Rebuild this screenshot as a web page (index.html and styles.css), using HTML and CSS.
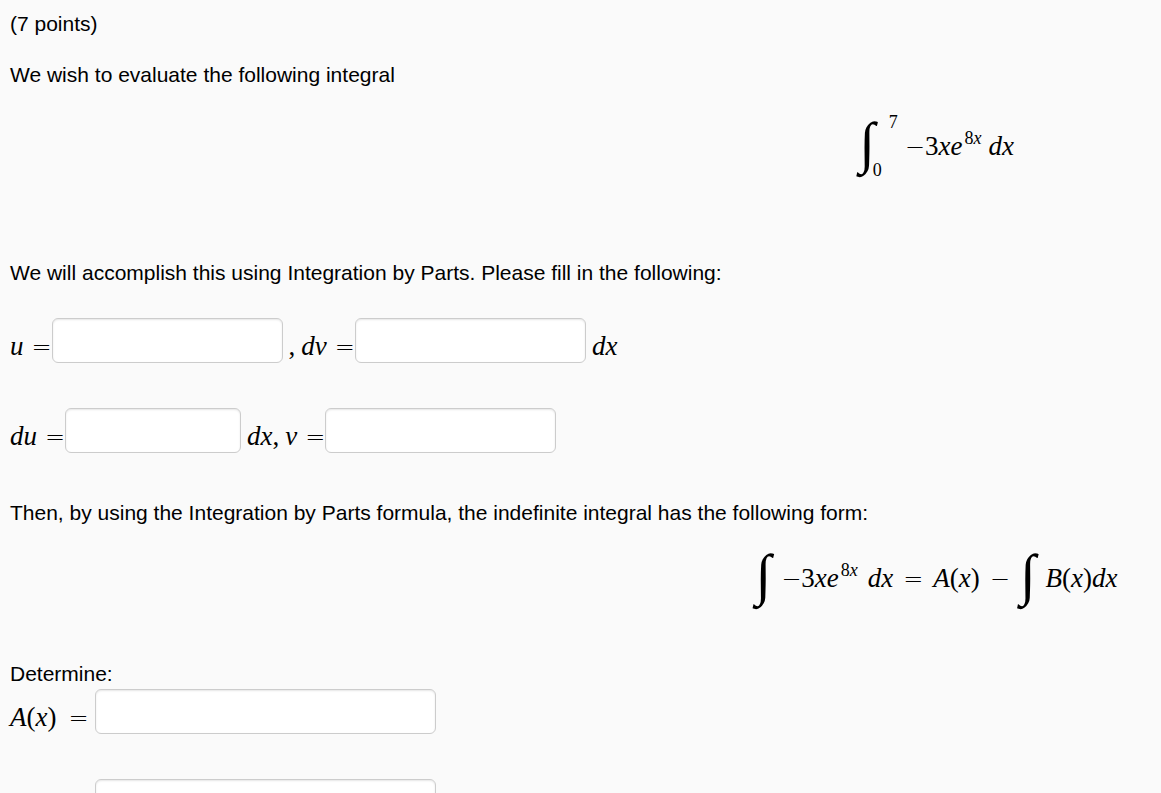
FILE: index.html
```
<!DOCTYPE html>
<html lang="en">
<head>
  <meta charset="UTF-8" />
  <title>Integration by Parts</title>
  <link rel="stylesheet" href="styles.css">
</head>
<body>

  <form class="problem">
    <p>(7 points)</p>
    <p>We wish to evaluate the following integral</p>

    <div class="equation definite">
      <span class="int">∫</span>
      <span class="limits"><span class="upper">7</span><span>0</span></span>
      <span class="math"><b>−</b>3<i>xe</i><sup>8<i>x</i></sup></span>
      <span class="math"><i>dx</i></span>
    </div>

    <p class="intro">We will accomplish this using Integration by Parts. Please fill in the following:</p>

    <div class="row">
      <label class="math" for="u"><i>u</i> <b>=</b></label>
      <input type="text" id="u" class="medium">
      <span class="math after">,</span>
      <label class="math" for="dv"><i>dv</i> <b>=</b></label>
      <input type="text" id="dv" class="medium">
      <span class="math after"><i>dx</i></span>
    </div>

    <div class="row">
      <label class="math" for="du"><i>du</i> <b>=</b></label>
      <input type="text" id="du" class="small">
      <span class="math after"><i>dx</i>,</span>
      <label class="math" for="v"><i>v</i> <b>=</b></label>
      <input type="text" id="v" class="medium">
    </div>

    <p>Then, by using the Integration by Parts formula, the indefinite integral has the following form:</p>

    <div class="equation indefinite">
      <span class="int">∫</span>
      <span class="math"><b>−</b>3<i>xe</i><sup>8<i>x</i></sup></span>
      <span class="math"><i>dx</i></span>
      <span class="math"><b>=</b></span>
      <span class="math"><i>A</i>(<i>x</i>)</span>
      <span class="math"><b>−</b></span>
      <span class="int">∫</span>
      <span class="math"><i>B</i>(<i>x</i>)<i>dx</i></span>
    </div>

    <p class="determine">Determine:</p>

    <div class="row answer">
      <label class="math" for="ax"><span><i>A</i>(<i>x</i>)</span> <b>=</b></label>
      <input type="text" id="ax" class="large">
    </div>
    <div class="row answer">
      <input type="text" id="bx" class="large" aria-label="B(x)">
    </div>
  </form>

</body>
</html>
```
FILE: styles.css
```
html, body {
  margin: 0;
  height: 100%;
  overflow: hidden;
  background: #fafafa;
  color: #000;
  font-family: "Liberation Sans", Arial, sans-serif;
  font-size: 21px;
  line-height: 30px;
}
.problem {
  padding: 9px 0 0 10px;
}
p {
  margin: 0 0 21px;
}
.math, .limits, .int {
  font-family: "Liberation Serif", "Times New Roman", serif;
}
.math {
  font-size: 27px;
  line-height: 34px;
  white-space: nowrap;
}
.math b {
  font-family: "DejaVu Sans", sans-serif;
  font-size: 24px;
  font-weight: 200;
  line-height: 1;
}
.math sup {
  margin-left: 2px;
  font-size: 18px;
  line-height: 0;
  vertical-align: 11px;
}
.equation {
  display: flex;
  justify-content: center;
  align-items: center;
  height: 56px;
  padding-left: 61%;
}
.definite {
  gap: 7px;
  margin: 28px 0 84px;
}
.indefinite {
  gap: 10px;
  margin: 22px 0 53px;
}
.int {
  font-size: 57px;
  font-style: italic;
  line-height: 50px;
  padding-bottom: 6px;
}
.limits {
  display: flex;
  flex-direction: column;
  justify-content: space-between;
  height: 68px;
  margin-left: -9px;
  font-size: 18px;
  line-height: 20px;
}
.upper {
  padding-left: 16px;
}
.intro {
  margin-bottom: 30px;
}
.row {
  display: flex;
  align-items: flex-end;
  margin-bottom: 45px;
}
label.math {
  display: flex;
  align-items: baseline;
  gap: 8px;
}
.after {
  margin: 0 6px;
}
input {
  box-sizing: border-box;
  height: 45px;
  padding: 6px 9px;
  border: 1px solid #ccc;
  border-radius: 6px;
  background: #fff;
  box-shadow: inset 0 1px 2px rgba(0,0,0,0.1);
  font: inherit;
}
.small {
  width: 176px;
}
.medium {
  width: 231px;
}
.large {
  width: 341px;
}
.determine {
  margin-bottom: 0;
}
.answer label {
  gap: 12px;
  width: 85px;
}
.answer input:first-child {
  margin-left: 85px;
}
```
